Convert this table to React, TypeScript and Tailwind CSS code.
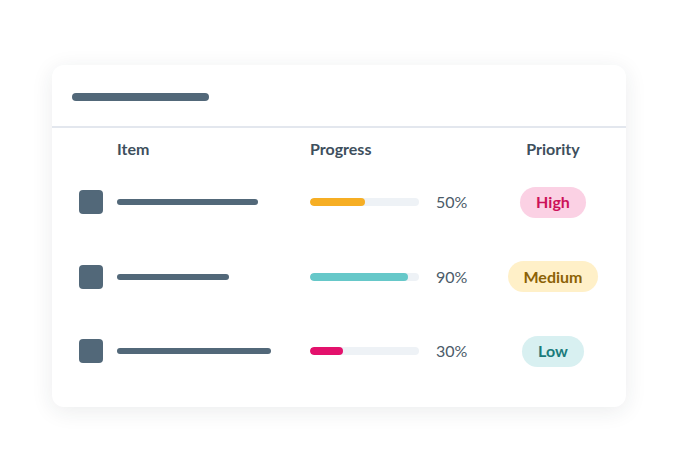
import React from "react";

type Row = { line: number; pct: number; bar: string; label: string; badge: string };

const rows: Row[] = [
  { line: 141, pct: 50, bar: "bg-[#f6ae24]", label: "High", badge: "bg-[#fbd1e4] text-[#cc1259]" },
  { line: 112, pct: 90, bar: "bg-[#66c8c9]", label: "Medium", badge: "bg-[#fff0c8] text-[#8c6206]" },
  { line: 154, pct: 30, bar: "bg-[#e3116c]", label: "Low", badge: "bg-[#d8f0f1] text-[#1b7b7b]" },
];

export default function App() {
  return (
    <div className="w-[678px] h-[472px] bg-white flex items-center justify-center font-['Lato',sans-serif]">
      <div className="w-[574px] h-[342px] bg-white rounded-xl shadow-[0_4px_22px_rgba(30,40,60,0.09)] flex flex-col">
        {/* title placeholder */}
        <div className="h-[63px] flex items-center pl-5 pt-[2px] border-b-2 border-[#e3e7ee]">
          <div className="w-[137px] h-2 rounded-full bg-[#526879]" />
        </div>

        {/* column heads */}
        <div className="flex items-center pt-[11px] h-[31px] text-[16px] font-bold text-[#3e4f5d] leading-5">
          <div className="w-[258px] pl-[65px]">Item</div>
          <div className="w-[190px]">Progress</div>
          <div className="w-[106px] text-center">Priority</div>
        </div>

        <div className="flex flex-col pt-[6px]">
          {rows.map((r, i) => (
            <div key={i} className={`flex items-center ${i === 1 ? "h-[75px]" : "h-[74px]"}`}>
              <div className="w-[258px] pl-[27px] flex items-center">
                <div className="w-6 h-6 rounded-[4px] bg-[#526879]" />
                <div className="ml-[14px] h-[6px] rounded-full bg-[#526879]" style={{ width: r.line }} />
              </div>
              <div className="w-[190px] flex items-center">
                <div className="w-[109px] h-2 rounded-full bg-[#eef2f6] overflow-hidden">
                  <div className={`h-full rounded-full ${r.bar}`} style={{ width: `${r.pct}%` }} />
                </div>
                <span className="ml-[17px] text-[16px] text-[#4b5b69]">{r.pct}%</span>
              </div>
              <div className="w-[106px] flex justify-center">
                <span className={`h-[31px] px-4 rounded-full flex items-center text-[16px] font-bold ${r.badge}`}>
                  {r.label}
                </span>
              </div>
            </div>
          ))}
        </div>
      </div>
    </div>
  );
}
